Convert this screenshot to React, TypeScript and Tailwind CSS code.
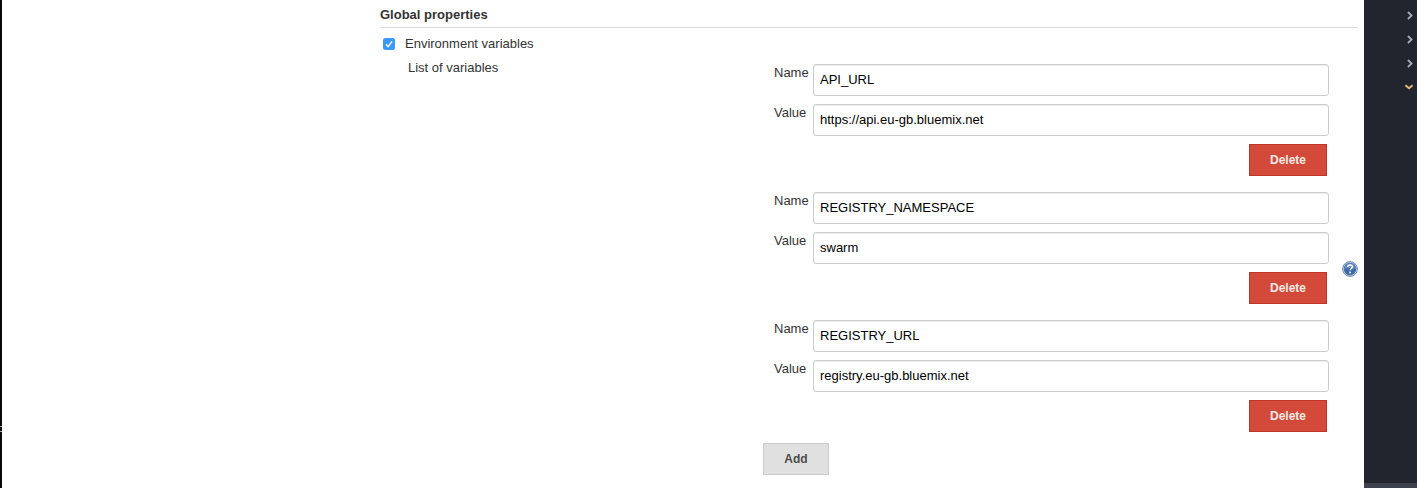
const variables = [
  { name: "API_URL", value: "https://api.eu-gb.bluemix.net" },
  { name: "REGISTRY_NAMESPACE", value: "swarm" },
  { name: "REGISTRY_URL", value: "registry.eu-gb.bluemix.net" },
];

function Field({ label, value }: { label: string; value: string }) {
  return (
    <label className="flex h-8">
      <span className="mt-px w-[39px] shrink-0 leading-4">{label}</span>
      <input
        type="text"
        defaultValue={value}
        className="h-8 w-[516px] rounded-[3px] border border-[#ccc] bg-white px-1.5 pb-px text-[13px] text-black shadow-[inset_0_1px_1px_rgba(0,0,0,0.075)] outline-none"
      />
    </label>
  );
}

function Chevron({ down = false }: { down?: boolean }) {
  return down ? (
    <svg className="mr-[3px] h-2.5 w-2.5" viewBox="0 0 10 10" fill="none">
      <path d="M1.4 3.2 5 6.3 8.6 3.2" stroke="#e2b97d" strokeWidth="1.9" />
    </svg>
  ) : (
    <svg className="mr-0.5 h-2.5 w-2.5" viewBox="0 0 10 10" fill="none">
      <path d="M2.9 2 6.6 5.5 2.9 9" stroke="#a2a9b8" strokeWidth="1.8" />
    </svg>
  );
}

function HelpIcon() {
  return (
    <svg className="h-4 w-4" viewBox="0 0 16 16">
      <circle cx="8" cy="8" r="7.4" fill="#c3d0e2" stroke="#6e8db8" strokeWidth="1" />
      <circle cx="8" cy="8" r="6.2" fill="#3e6cab" />
      <path d="M2 8a6 6 0 0 1 12 0Q8 5.8 2 8Z" fill="#6288bc" />
      <path d="M5.8 6.1c0-3 4.6-2.8 4.6-.3C10.4 7.5 8.1 7.5 8.1 9.3" fill="none" stroke="#fff" strokeWidth="1.5" />
      <rect x="7.3" y="10.6" width="1.7" height="1.7" fill="#fff" />
    </svg>
  );
}

export default function App() {
  return (
    <div className="flex h-[488px] w-[1417px] overflow-hidden bg-white font-['Liberation_Sans',Arial,sans-serif] text-[13px] text-[#333]">
      <div className="flex w-0.5 shrink-0 flex-col bg-[#08080a] pt-[426px]">
        <span className="h-px bg-[#aaa]" />
        <span className="mt-1 h-px bg-[#aaa]" />
      </div>
      <main className="w-[1362px] shrink-0 pl-[378px]">
        <h2 className="flex h-7 w-[978px] items-center border-b border-[#ddd] pt-0.5 font-bold">Global properties</h2>
        <label className="flex h-8 items-center pl-[3px]">
          <input type="checkbox" defaultChecked className="peer sr-only" />
          <svg className="h-3 w-3" viewBox="0 0 12 12">
            <rect width="12" height="12" rx="2.5" fill="#3b99fc" />
            <path d="m3 6.3 2.1 2.4 3.9-5.4" fill="none" stroke="#fff" strokeWidth="1.4" />
          </svg>
          <span className="ml-[10px]">Environment variables</span>
        </label>
        <div className="flex">
          <div className="w-[383px] shrink-0 pl-7 leading-4">List of variables</div>
          <div className="w-[567px] shrink-0 pt-1">
            <div className="flex flex-col gap-4 pl-[11px]">
              {variables.map((variable) => (
                <div key={variable.name} className="flex flex-col gap-2">
                  <Field label="Name" value={variable.name} />
                  <Field label="Value" value={variable.value} />
                  <button className="mr-[3px] h-8 w-[78px] self-end border border-[#bd3527] bg-[#d34a3a] text-[12px] font-bold text-[#f8e8e5]">
                    Delete
                  </button>
                </div>
              ))}
            </div>
            <button className="mt-[11px] h-8 w-[66px] border border-[#ccc] bg-[#e0e0e0] text-[12px] font-bold text-[#4d4d4d]">
              Add
            </button>
          </div>
          <button aria-label="Help" className="mt-[201px] ml-3 h-4 w-4 shrink-0">
            <HelpIcon />
          </button>
        </div>
      </main>
      <aside className="flex w-[53px] shrink-0 flex-col justify-between bg-[#22252e]">
        <div className="flex flex-col items-end gap-3.5 pt-2.5">
          <Chevron />
          <Chevron />
          <Chevron />
          <Chevron down />
        </div>
        <div className="h-[5px] bg-[#3d404d]" />
      </aside>
    </div>
  );
}
